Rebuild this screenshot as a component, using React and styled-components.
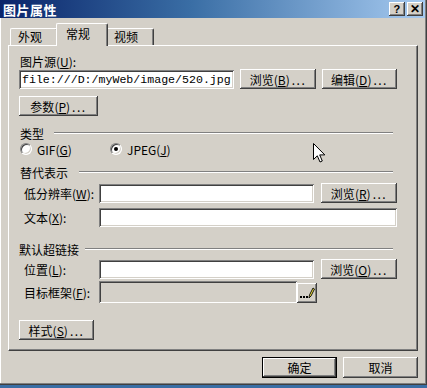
import styled, { createGlobalStyle } from "styled-components";

const GlobalStyle = createGlobalStyle`
  html, body {
    margin: 0;
    padding: 0;
    background: #3a6ea5;
  }
  body {
    font-family: "Noto Sans CJK SC", "Liberation Sans", sans-serif;
    font-size: 12px;
    color: #000;
  }
`;

const raised = `
  background: #d4d0c8;
  box-shadow: inset -1px -1px #404040, inset 1px 1px #fff,
    inset -2px -2px #808080, inset 2px 2px #d4d0c8;
`;

const sunken = `
  box-shadow: inset 1px 1px #808080, inset -1px -1px #fff,
    inset 2px 2px #404040, inset -2px -2px #d4d0c8;
`;

const Window = styled.div`
  position: relative;
  width: 427px;
  height: 385px;
  box-sizing: border-box;
  background: #d4d0c8;
  border-right: 1px solid #404040;
  border-bottom: 1px solid #404040;
  box-shadow: inset -1px -1px #808080, inset 1px 0 #fff;
  display: flex;
  flex-direction: column;
  overflow: hidden;
`;

const TitleBar = styled.div`
  height: 18px;
  flex: none;
  margin-right: 1px;
  padding: 0 2px 0 3px;
  display: flex;
  align-items: center;
  justify-content: space-between;
  background: linear-gradient(90deg, #0a246a 0%, #3a6ea5 45%, #a6caf0 100%);
  color: #fff;
  font-weight: 700;
  font-size: 13px;
  letter-spacing: 0.5px;
`;

const CapButtons = styled.div`
  display: flex;
  gap: 2px;
`;

const CapButton = styled.div`
  ${raised}
  width: 16px;
  height: 14px;
  display: flex;
  align-items: center;
  justify-content: center;
  color: #000;
  font-family: "Liberation Sans", sans-serif;
  font-weight: 700;
  font-size: ${(p) => p.$size || 11}px;
  line-height: 1;
`;

const TabStrip = styled.div`
  height: 27px;
  flex: none;
  padding-left: 10px;
  display: flex;
  align-items: flex-end;
`;

const Tab = styled.div`
  position: relative;
  box-sizing: border-box;
  width: ${(p) => (p.$active ? 52 : 48)}px;
  height: ${(p) => (p.$active ? 23 : 17)}px;
  margin: 0 ${(p) => (p.$active ? -2 : 0)}px ${(p) => (p.$active ? -1 : 0)}px;
  z-index: ${(p) => (p.$active ? 2 : 1)};
  padding: ${(p) => (p.$active ? "2px 0 0 9px" : "0 0 0 7px")};
  background: #d4d0c8;
  border-top: 1px solid #fff;
  border-left: 1px solid #fff;
  border-right: 1px solid #404040;
  border-radius: 2px 2px 0 0;
  box-shadow: inset -1px 0 #808080;
  line-height: 16px;
`;

const Panel = styled.div`
  position: relative;
  flex: none;
  margin: 0 8px;
  height: 306px;
  box-sizing: border-box;
  border-top: 1px solid #fff;
  border-left: 1px solid #fff;
  border-right: 1px solid #404040;
  border-bottom: 1px solid #404040;
  box-shadow: inset -1px -1px #808080;
  padding: 0 20px 0 10px;
  display: flex;
  flex-direction: column;
`;

const Caption = styled.div`
  height: 14px;
  line-height: 14px;
  margin-top: 9px;
  padding-left: 1px;
`;

const Row = styled.div`
  display: flex;
  align-items: center;
  gap: ${(p) => p.$gap || 6}px;
  margin-top: ${(p) => p.$mt || 0}px;
`;

const FieldRow = styled.div`
  display: grid;
  grid-template-columns: 80px 1fr ${(p) => (p.$button ? "83px" : "")};
  align-items: center;
  justify-items: stretch;
  margin-top: ${(p) => p.$mt || 0}px;
`;

const Label = styled.div`
  box-sizing: border-box;
  width: 80px;
  padding-left: 5px;
  white-space: nowrap;
  flex: none;
`;

const Field = styled.div`
  box-sizing: border-box;
  height: ${(p) => p.$h || 19}px;
  width: ${(p) => (p.$w ? `${p.$w}px` : "auto")};
  background: ${(p) => (p.$disabled ? "#d4d0c8" : "#fff")};
  ${sunken}
  padding: 0 3px;
  display: flex;
  align-items: center;
  white-space: nowrap;
  overflow: hidden;
`;

const Mono = styled.span`
  font-family: "Liberation Mono", "DejaVu Sans Mono", monospace;
  font-size: 11.6px;
`;

const Button = styled.div`
  ${raised}
  box-sizing: border-box;
  width: ${(p) => p.$w || 76}px;
  height: ${(p) => p.$h || 20}px;
  margin-top: ${(p) => p.$mt || 0}px;
  display: flex;
  align-items: center;
  justify-content: center;
  white-space: nowrap;
  flex: none;
  justify-self: end;
`;

const DefaultButton = styled(Button)`
  border: 1px solid #000;
`;

const Dots = styled.span`
  letter-spacing: 1.5px;
  margin-left: 2px;
`;

const GroupHead = styled.div`
  display: flex;
  align-items: center;
  height: 16px;
  margin-top: ${(p) => p.$mt || 0}px;
  margin-right: 4px;
  padding-left: ${(p) => p.$indent ?? 1}px;
`;

const Rule = styled.div`
  flex: 1;
  border-top: 1px solid #808080;
  border-bottom: 1px solid #fff;
  margin-left: ${(p) => p.$gap || 9}px;
`;

const RadioRow = styled.div`
  display: flex;
  align-items: center;
  height: 16px;
  padding-left: 1px;
`;

const RadioItem = styled.div`
  display: flex;
  align-items: center;
  gap: 5px;
  width: ${(p) => p.$w || "auto"};
`;

const RadioText = styled.span`
  white-space: nowrap;
`;

const RadioDot = styled.div`
  width: 12px;
  height: 12px;
  box-sizing: border-box;
  border-radius: 50%;
  background: #fff;
  border-top: 1px solid #808080;
  border-left: 1px solid #808080;
  border-right: 1px solid #fff;
  border-bottom: 1px solid #fff;
  box-shadow: inset 1px 1px #404040, inset -1px -1px #d4d0c8;
  display: flex;
  align-items: center;
  justify-content: center;

  &::after {
    content: "";
    width: 4px;
    height: 4px;
    border-radius: 50%;
    background: ${(p) => (p.$checked ? "#000" : "transparent")};
  }
`;

const FrameRow = styled.div`
  display: flex;
  align-items: flex-end;
  margin-top: 2px;

  & > ${Label} {
    align-self: center;
  }
`;

const Footer = styled.div`
  display: flex;
  justify-content: flex-end;
  gap: 6px;
  margin-top: 6px;
  padding-right: 8px;
`;

const Cursor = styled.svg`
  position: absolute;
  left: 313px;
  top: 143px;
`;

const Key = ({ k }) => (
  <>
    (<u>{k}</u>)
  </>
);

const PencilIcon = () => (
  <svg width="16" height="14" viewBox="0 0 16 14">
    <rect x="1" y="10" width="2" height="2" fill="#000" />
    <rect x="4" y="10" width="2" height="2" fill="#000" />
    <rect x="7" y="10" width="2" height="2" fill="#000" />
    <path d="M10 12 L10.5 9 L14 2 L15.5 3 L12 10 Z" fill="#f0e040" stroke="#000" strokeWidth="0.9" />
  </svg>
);

export default function App() {
  return (
    <>
      <GlobalStyle />
      <Window>
        <TitleBar>
          <span>图片属性</span>
          <CapButtons>
            <CapButton>?</CapButton>
            <CapButton $size={12}>✕</CapButton>
          </CapButtons>
        </TitleBar>

        <TabStrip>
          <Tab>外观</Tab>
          <Tab $active>常规</Tab>
          <Tab>视频</Tab>
        </TabStrip>

        <Panel>
          <Caption>
            图片源<Key k="U" />:
          </Caption>
          <Row $gap={6}>
            <Field $w={215}>
              <Mono>file:///D:/myWeb/image/520.jpg</Mono>
            </Field>
            <Button>
              浏览<Key k="B" />
              <Dots>...</Dots>
            </Button>
            <Button $w={75}>
              编辑<Key k="D" />
              <Dots>...</Dots>
            </Button>
          </Row>
          <Button $w={79} $mt={7}>
            参数<Key k="P" />
            <Dots>...</Dots>
          </Button>

          <GroupHead $mt={9}>
            类型
            <Rule $gap={10} />
          </GroupHead>
          <RadioRow>
            <RadioItem $w="90px">
              <RadioDot />
              <RadioText>
                GIF<Key k="G" />
              </RadioText>
            </RadioItem>
            <RadioItem>
              <RadioDot $checked />
              <RadioText>
                JPEG<Key k="J" />
              </RadioText>
            </RadioItem>
          </RadioRow>

          <GroupHead $mt={7}>
            替代表示
            <Rule $gap={11} />
          </GroupHead>
          <FieldRow $button $mt={3}>
            <Label>
              低分辨率<Key k="W" />:
            </Label>
            <Field />
            <Button>
              浏览<Key k="R" />
              <Dots>...</Dots>
            </Button>
          </FieldRow>
          <FieldRow $mt={5}>
            <Label>
              文本<Key k="X" />:
            </Label>
            <Field />
          </FieldRow>

          <GroupHead $mt={14} $indent={0}>
            默认超链接
            <Rule $gap={6} />
          </GroupHead>
          <FieldRow $button $mt={2}>
            <Label>
              位置<Key k="L" />:
            </Label>
            <Field />
            <Button>
              浏览<Key k="O" />
              <Dots>...</Dots>
            </Button>
          </FieldRow>
          <FrameRow>
            <Label>
              目标框架<Key k="F" />:
            </Label>
            <Field $w={198} $h={22} $disabled />
            <Button $w={20} $h={20}>
              <PencilIcon />
            </Button>
          </FrameRow>

          <Button $w={75} $mt={17}>
            样式<Key k="S" />
            <Dots>...</Dots>
          </Button>
        </Panel>

        <Footer>
          <DefaultButton $w={75} $h={21}>
            确定
          </DefaultButton>
          <Button $w={75} $h={21}>
            取消
          </Button>
        </Footer>

        <Cursor width="13" height="21" viewBox="0 0 13 21">
          <path
            d="M0.5 0.5 L0.5 16.5 L4.3 12.8 L7 19 L9.3 18 L6.7 11.9 L11.8 11.9 Z"
            fill="#fff"
            stroke="#000"
            strokeWidth="1"
          />
        </Cursor>
      </Window>
    </>
  );
}
